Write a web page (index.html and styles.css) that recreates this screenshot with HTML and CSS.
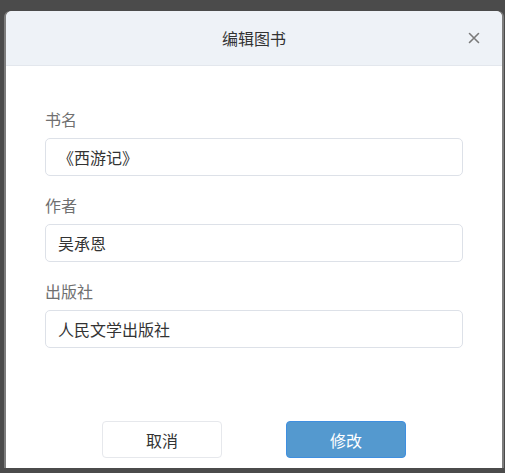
FILE: index.html
```html
<!DOCTYPE html>
<html lang="zh">
<head>
<meta charset="utf-8">
<link rel="stylesheet" href="styles.css">
</head>
<body>
<div class="modal">
  <div class="modal-header">
    <span class="modal-title">编辑图书</span>
    <span class="close" aria-label="关闭">
      <svg width="12" height="12" viewBox="0 0 12 12"><path d="M1.5 1.5 L10.5 10.5 M10.5 1.5 L1.5 10.5" stroke="#7a7a7a" stroke-width="1.6" stroke-linecap="round" fill="none"/></svg>
    </span>
  </div>
  <div class="modal-body">
    <div class="field">
      <label class="field-label">书名</label>
      <div class="input">《西游记》</div>
    </div>
    <div class="field">
      <label class="field-label">作者</label>
      <div class="input">吴承恩</div>
    </div>
    <div class="field">
      <label class="field-label">出版社</label>
      <div class="input">人民文学出版社</div>
    </div>
  </div>
  <div class="modal-footer">
    <button class="btn btn-cancel">取消</button>
    <button class="btn btn-primary">修改</button>
  </div>
</div>
</body>
</html>
```

FILE: styles.css
```css
html, body {
  margin: 0;
  padding: 0;
}
body {
  background: #4b4b4b;
  width: 505px;
  height: 473px;
  padding: 11px 3px 5px 6px;
  box-sizing: border-box;
  font-family: "Noto Sans CJK SC", "Noto Sans", sans-serif;
}
.modal {
  width: 496px;
  height: 457px;
  background: #ffffff;
  border-radius: 6px 6px 0 0;
  box-shadow: -2px 0 0 #7d7d7d, 2px 0 0 #7d7d7d;
  display: flex;
  flex-direction: column;
  position: relative;
}
.modal-header {
  height: 54px;
  background: #eef2f7;
  border-bottom: 1px solid #e3e7ed;
  border-radius: 6px 6px 0 0;
  display: flex;
  align-items: center;
  justify-content: center;
  position: relative;
}
.modal-title {
  font-size: 16px;
  color: #333333;
  line-height: 22px;
}
.close {
  position: absolute;
  right: 22px;
  top: 21px;
  width: 12px;
  height: 12px;
  display: block;
}
.close svg {
  display: block;
}
.modal-body {
  padding: 42px 39px 0 39px;
  flex: 1;
}
.field {
  margin-bottom: 18px;
}
.field-label {
  display: block;
  font-size: 16px;
  line-height: 22px;
  color: #707070;
  margin-bottom: 8px;
}
.input {
  height: 38px;
  box-sizing: border-box;
  border: 1px solid #dde1e8;
  border-radius: 5px;
  padding: 0 12px;
  font-size: 16px;
  line-height: 36px;
  color: #333333;
}
.modal-footer {
  display: flex;
  justify-content: center;
  gap: 64px;
  padding-bottom: 10px;
}
.btn {
  width: 120px;
  height: 37px;
  box-sizing: border-box;
  border-radius: 4px;
  font-family: "Noto Sans CJK SC", "Noto Sans", sans-serif;
  font-size: 16px;
  padding: 0;
  cursor: pointer;
}
.btn-cancel {
  background: #ffffff;
  border: 1px solid #e6e8ec;
  color: #333333;
}
.btn-primary {
  background: #5499cf;
  border: 1px solid #3f8fe0;
  color: #ffffff;
}
```
